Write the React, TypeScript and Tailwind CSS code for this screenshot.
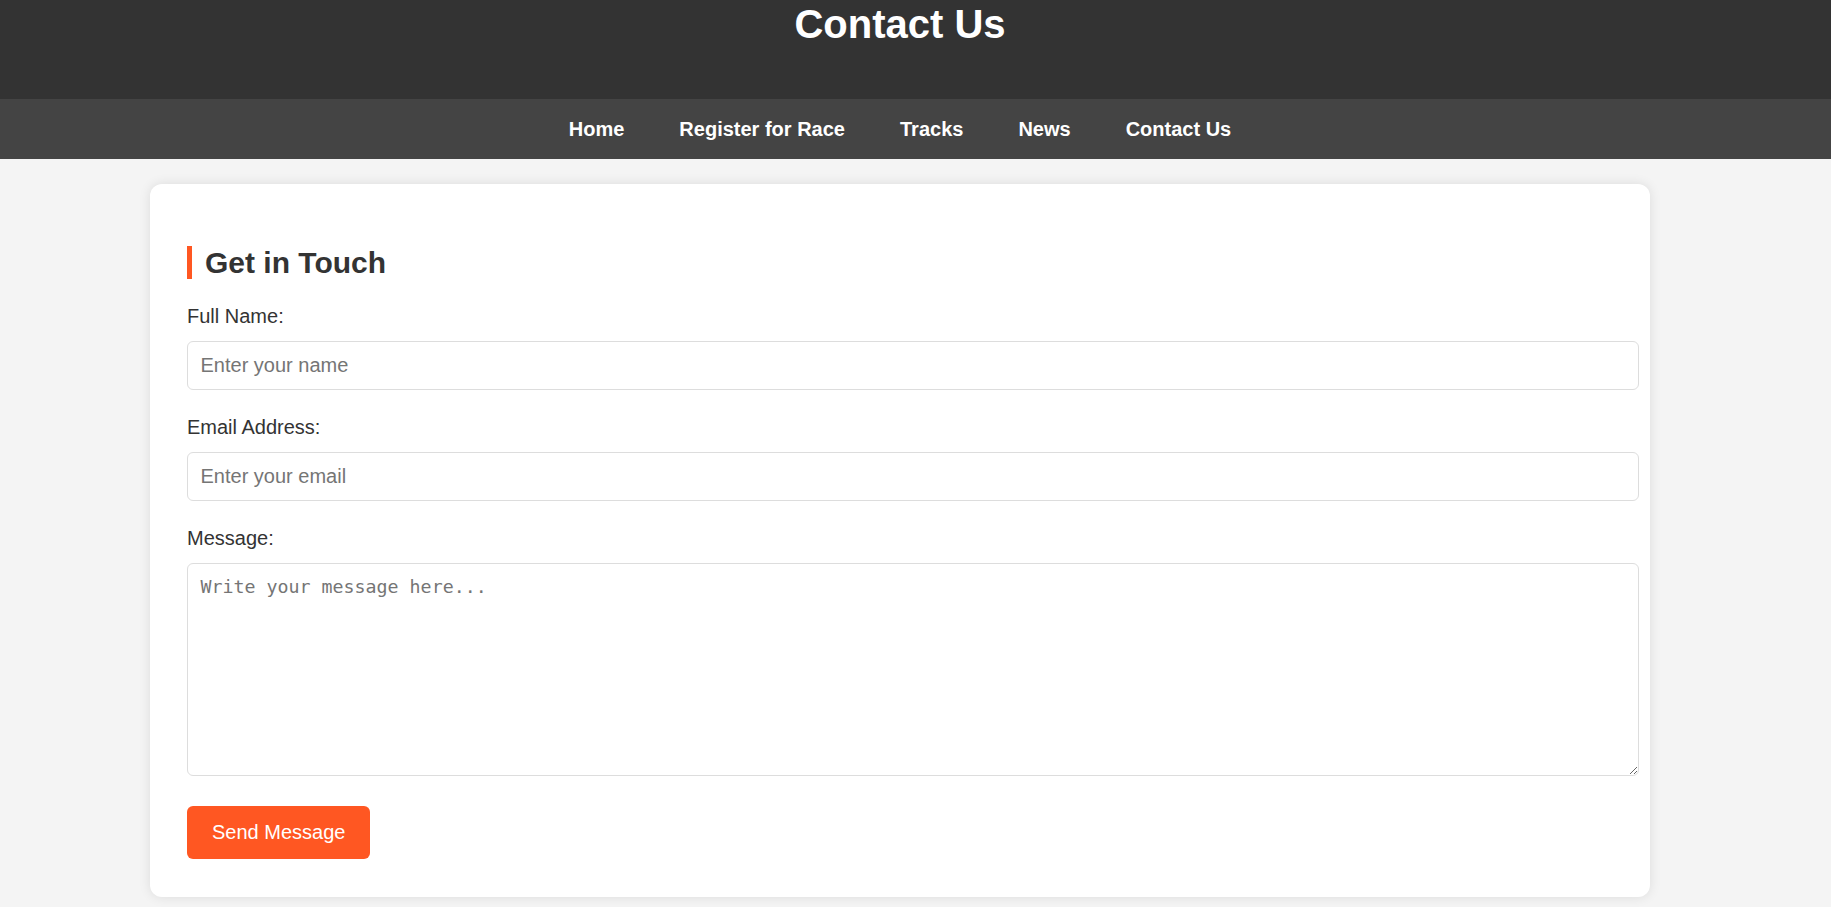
const navLinks = ["Home", "Register for Race", "Tracks", "News", "Contact Us"];

function Field({ label, children }: { label: string; children: React.ReactNode }) {
    return (
        <div className="mb-[26px]">
            <label className="block mb-[13px] text-[20px] leading-[23px] text-[#333]">{label}</label>
            {children}
        </div>
    );
}

export default function App() {
    return (
        <div className="min-h-screen bg-[#f4f4f4] pb-[25px] font-['Liberation_Sans',Arial,sans-serif]">
            <header className="bg-[#333] h-[99px]">
                <div className="w-[1800px] text-center pt-[1px]">
                    <h1 className="text-[40px] leading-[46px] font-bold text-white">Contact Us</h1>
                </div>
            </header>

            <nav className="bg-[#444] h-[60px]">
                <div className="w-[1800px] h-full flex items-center justify-center gap-[55px]">
                    {navLinks.map((l) => (
                        <a key={l} href="#" className="text-[20px] leading-[23px] font-bold text-white">
                            {l}
                        </a>
                    ))}
                </div>
            </nav>

            <div className="w-[1800px] pt-[25px]">
                <div className="mx-auto w-[1500px] bg-white rounded-[12px] px-[37px] pt-[37.5px] pb-[38px] shadow-[0_0_12px_rgba(0,0,0,0.1)]">
                    <h2 className="mt-[24px] mb-[26px] border-l-[5px] border-[#ff5722] pl-[13px] text-[30px] leading-[33px] font-bold text-[#333]">
                        Get in Touch
                    </h2>

                    <form onSubmit={(e) => e.preventDefault()}>
                        <Field label="Full Name:">
                            <input
                                type="text"
                                placeholder="Enter your name"
                                className="block w-[1452px] h-[49px] px-[12.5px] border border-[#ddd] rounded-[6px] text-[20px] text-[#333] placeholder:text-[#757575] outline-none"
                            />
                        </Field>
                        <Field label="Email Address:">
                            <input
                                type="email"
                                placeholder="Enter your email"
                                className="block w-[1452px] h-[49px] px-[12.5px] border border-[#ddd] rounded-[6px] text-[20px] text-[#333] placeholder:text-[#757575] outline-none"
                            />
                        </Field>
                        <div className="mb-[30.5px]">
                            <label className="block mb-[13px] text-[20px] leading-[23px] text-[#333]">Message:</label>
                            <textarea
                                placeholder="Write your message here..."
                                className="block w-[1452px] h-[213px] px-[12.5px] pt-[12px] border border-[#ddd] rounded-[6px] font-['DejaVu_Sans_Mono',monospace] text-[18.3px] leading-[22px] text-[#333] placeholder:text-[#757575] outline-none resize-y"
                            />
                        </div>
                        <button
                            type="submit"
                            className="block h-[53px] px-[25px] rounded-[6px] bg-[#ff5722] text-white text-[20px] leading-[23px]"
                        >
                            Send Message
                        </button>
                    </form>
                </div>
            </div>
        </div>
    );
}
